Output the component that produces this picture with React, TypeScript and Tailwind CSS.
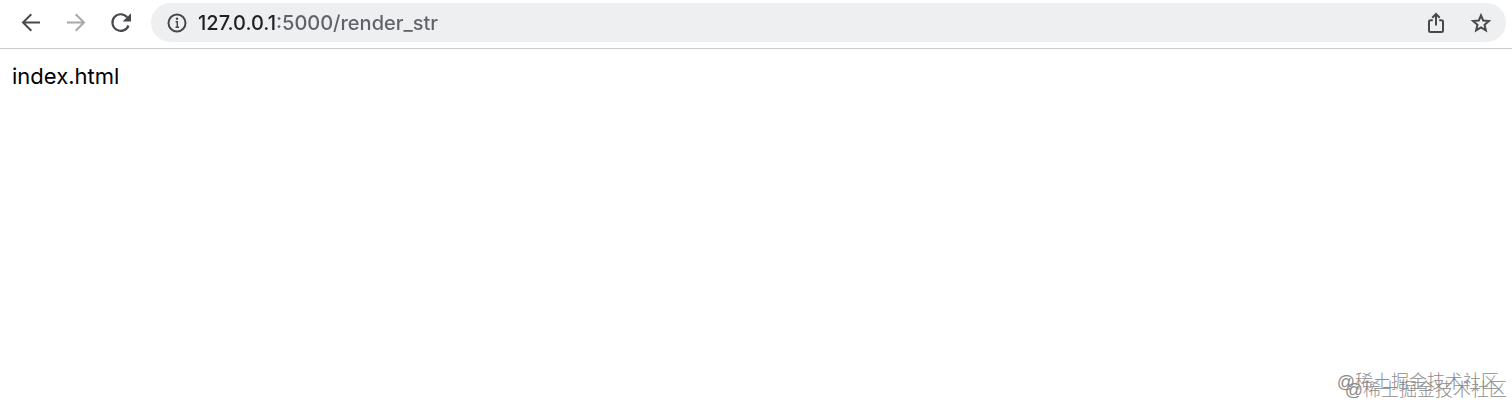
import React from "react";

const WATERMARK = "@稀土掘金技术社区";

type IconProps = { children: React.ReactNode };

// All toolbar icons share a 30px box and a 2px stroke
const Icon: React.FC<IconProps> = ({ children }) => (
  <svg
    className="size-[30px]"
    viewBox="0 0 30 30"
    fill="none"
    stroke="currentColor"
    strokeWidth="2"
    aria-hidden="true"
  >
    {children}
  </svg>
);

const BackIcon = () => (
  <Icon>
    <path d="M24 14.500H7.500M15.300 6.200 7 14.500l8.300 8.300" />
  </Icon>
);

const ForwardIcon = () => (
  <Icon>
    <path d="M6 14.500h16.500M14.700 6.200l8.300 8.300-8.300 8.300" />
  </Icon>
);

const ReloadIcon = () => (
  <Icon>
    <path d="M21.200 9.300A8.300 8.300 0 1 0 22.500 17.500" strokeWidth="2.2" />
    <path d="M25 5.200v8.300h-8.300z" fill="currentColor" stroke="none" />
  </Icon>
);

const InfoIcon = () => (
  <Icon>
    <circle cx="15" cy="15" r="8.500" />
    <path d="M13.600 13.700h1.700v5.600M13.500 19.200h3.500" strokeWidth="1.500" />
    <circle cx="15" cy="10.800" r="1.200" fill="currentColor" stroke="none" />
  </Icon>
);

const ShareIcon = () => (
  <Icon>
    <path d="M11.800 12.300H9.500A1.500 1.500 0 0 0 8 13.800v8.700A1.500 1.500 0 0 0 9.500 24h11a1.500 1.500 0 0 0 1.500-1.500v-8.700a1.500 1.500 0 0 0-1.500-1.500h-2.300" />
    <path d="M15 17.500V6.500M11.300 9.700 15 6l3.700 3.700" />
  </Icon>
);

const StarIcon = () => (
  <Icon>
    <path d="M15 7.300 17.170 12.500 22.890 13.030 18.520 16.740 19.880 22.300 15 19.300 10.120 22.300 11.480 16.740 7.110 13.030 12.830 12.500z" />
  </Icon>
);

const Toolbar: React.FC = () => {
  return (
    <header className="flex items-center border-b border-[#c9cbcd] pl-2 pr-1.5 pt-[3px] pb-1.5 text-[#47494c]">
      <nav className="flex shrink-0 pr-2" aria-label="History">
        <button type="button" aria-label="Back" className="flex w-[45px] justify-center">
          <BackIcon />
        </button>
        <button type="button" aria-label="Forward" disabled className="flex w-[45px] justify-center text-[#a6a8aa]">
          <ForwardIcon />
        </button>
        <button type="button" aria-label="Reload" className="flex w-[45px] justify-center">
          <ReloadIcon />
        </button>
      </nav>
      <div className="flex h-[39px] min-w-0 grow items-center rounded-full bg-[#eeeff1] pl-[11px] pr-2.5">
        <button type="button" aria-label="View site information" className="mr-1.5 shrink-0">
          <InfoIcon />
        </button>
        {/* host is darker than the port and path */}
        <input
          type="text"
          aria-label="Address"
          defaultValue="127.0.0.1:5000/render_str"
          spellCheck={false}
          className="min-w-0 grow bg-[linear-gradient(to_right,#202124_78px,#5f6368_78px)] bg-clip-text font-['Inter',sans-serif] text-[20px] leading-7 font-medium text-transparent caret-[#202124] outline-none"
        />
        <div className="flex shrink-0 gap-[15px]">
          <button type="button" aria-label="Share this page">
            <ShareIcon />
          </button>
          <button type="button" aria-label="Bookmark this page">
            <StarIcon />
          </button>
        </div>
      </div>
    </header>
  );
};

const App: React.FC = () => {
  return (
    <div className="relative flex min-h-screen flex-col bg-white">
      <Toolbar />
      <main className="grow px-3 py-3 font-['Inter',sans-serif] text-[22px] leading-[30px] text-black">
        index.html
      </main>
      <div className="pointer-events-none absolute right-[5px] bottom-1 font-['Liberation_Sans','Noto_Sans_CJK_SC',sans-serif] text-[18px] leading-6 font-light whitespace-nowrap text-[#8c8c8c]">
        <p>{WATERMARK}</p>
        <p className="absolute right-2 bottom-2" aria-hidden="true">
          {WATERMARK}
        </p>
      </div>
    </div>
  );
};

export default App;
